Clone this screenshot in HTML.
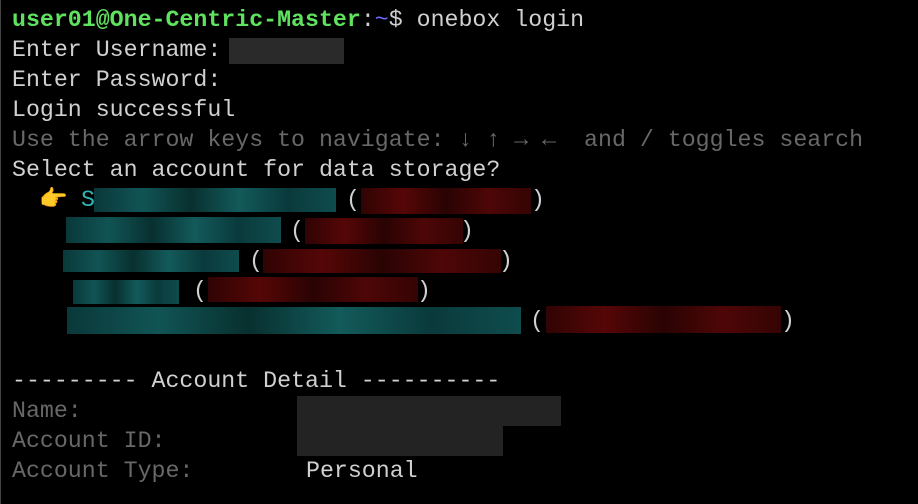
<!DOCTYPE html>
<html><head><meta charset="utf-8"><style>
html,body{margin:0;padding:0;background:#000;width:918px;height:504px;overflow:hidden}
body{position:relative;font-family:"Liberation Mono",monospace;font-size:23.25px;color:#d0d0d0;border-left:1px solid #444;box-sizing:border-box}
.l{position:absolute;left:11px;height:30px;line-height:30px;white-space:pre}
.g{color:#5fe35f;font-weight:bold}
.b{color:#6b6bff}
.d{color:#686868}
.c{color:#2fb5b5}
.r{position:absolute}
.cy{background:linear-gradient(90deg,#0a3839,#115455 20%,#08302f 40%,#135a5b 60%,#0a3a3b 80%,#0f4c4d)}
.rd{background:linear-gradient(90deg,#300404,#560606 25%,#2a0303 50%,#4e0606 75%,#350404)}
.gy{background:#232323}
</style></head><body>
<div class="l" style="top:5px"><span class="g">user01@One-Centric-Master</span>:<span class="b">~</span>$ onebox login</div>
<div class="l" style="top:35px">Enter Username:</div>
<div class="r gy" style="left:228px;top:38px;width:115px;height:26px;background:#2a2a2a"></div>
<div class="l" style="top:65px">Enter Password:</div>
<div class="l" style="top:95px">Login successful</div>
<div class="l d" style="top:125px">Use the arrow keys to navigate: ↓ ↑ → ←  and / toggles search</div>
<div class="l" style="top:155px">Select an account for data storage?</div>
<div class="l" style="top:185px;left:38px;font-size:23px">👉</div>
<div class="l c" style="top:185px;left:80px">S</div>
<div class="r cy" style="left:93px;top:188px;width:242px;height:24px"></div>
<div class="l" style="top:185px;left:345px">(</div>
<div class="r rd" style="left:360px;top:188px;width:170px;height:26px"></div>
<div class="l" style="top:185px;left:530px">)</div>

<div class="r cy" style="left:65px;top:217px;width:215px;height:26px"></div>
<div class="l" style="top:216px;left:289px">(</div>
<div class="r rd" style="left:304px;top:218px;width:158px;height:26px"></div>
<div class="l" style="top:216px;left:459px">)</div>

<div class="r cy" style="left:62px;top:250px;width:176px;height:22px"></div>
<div class="l" style="top:246px;left:248px">(</div>
<div class="r rd" style="left:262px;top:249px;width:238px;height:24px"></div>
<div class="l" style="top:246px;left:498px">)</div>

<div class="r cy" style="left:72px;top:280px;width:106px;height:24px"></div>
<div class="l" style="top:276px;left:192px">(</div>
<div class="r rd" style="left:207px;top:277px;width:210px;height:25px"></div>
<div class="l" style="top:276px;left:416px">)</div>

<div class="r cy" style="left:66px;top:307px;width:454px;height:27px"></div>
<div class="l" style="top:306px;left:529px">(</div>
<div class="r rd" style="left:545px;top:306px;width:235px;height:27px"></div>
<div class="l" style="top:306px;left:780px">)</div>

<div class="l" style="top:366px">--------- Account Detail ----------</div>
<div class="l d" style="top:396px">Name:</div>
<div class="r gy" style="left:296px;top:396px;width:264px;height:30px"></div>
<div class="l d" style="top:426px">Account ID:</div>
<div class="r gy" style="left:296px;top:426px;width:206px;height:30px"></div>
<div class="l d" style="top:456px">Account Type:</div>
<div class="l" style="top:456px;left:305px">Personal</div>
</body></html>
